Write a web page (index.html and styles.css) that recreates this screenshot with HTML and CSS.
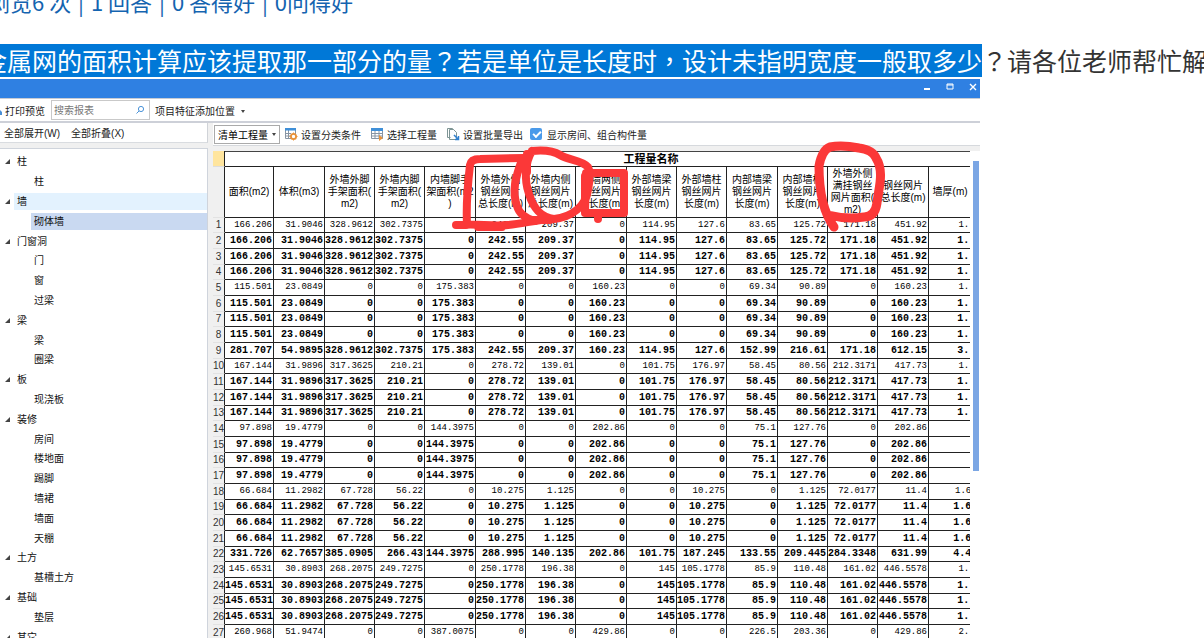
FILE: index.html
```html
<!DOCTYPE html>
<html lang="zh-CN">
<head>
<meta charset="utf-8">
<title>工程量报表</title>
<link rel="stylesheet" href="styles.css">
</head>
<body>
<p class="stats">浏览6 次 <i>|</i> 1 回答 <i>|</i> 0 答得好 <i>|</i> 0问得好</p>
<h1 class="question"><mark>金属网的面积计算应该提取那一部分的量<span class="punct" lang="zh-TW">？</span>若是单位是长度时<span class="punct" lang="zh-TW">，</span>设计未指明宽度一般取多少</mark><span class="punct" lang="zh-TW">？</span>请各位老师帮忙解</h1>

<main class="app">
  <header class="titlebar">
    <button aria-label="最小化"><svg viewBox="0 0 8 8"><path d="M1 6h6" stroke-width="2"/></svg></button>
    <button aria-label="最大化"><svg viewBox="0 0 8 8"><path d="M1 1h6v5H1zM1 2h6"/></svg></button>
    <button aria-label="关闭"><svg viewBox="0 0 8 8"><path d="M1 1l6 6M7 1l-6 6" stroke-width="1.4"/></svg></button>
  </header>
  <div class="toolbar">
    <svg class="printer" viewBox="0 0 3 10"><path d="M0 5l2 2v3H0z"/></svg>
    <button>打印预览</button>
    <div class="search">
      <input type="text" placeholder="搜索报表" aria-label="搜索报表">
      <svg viewBox="0 0 10 10"><circle cx="6" cy="4" r="2.6"/><path d="M4 6L1.5 8.5"/></svg>
    </div>
    <button>项目特征添加位置<i class="caret"></i></button>
  </div>
  <div class="body">
    <aside class="side">
      <div class="sidebar-tools"><button>全部展开(W)</button><button>全部折叠(X)</button></div>
      <ul class="tree">
        <li class="group"><span>柱</span></li><li><span>柱</span></li>
        <li class="group hover"><span>墙</span></li><li class="selected"><span>砌体墙</span></li>
        <li class="group"><span>门窗洞</span></li><li><span>门</span></li><li><span>窗</span></li><li><span>过梁</span></li>
        <li class="group"><span>梁</span></li><li><span>梁</span></li><li><span>圈梁</span></li>
        <li class="group"><span>板</span></li><li><span>现浇板</span></li>
        <li class="group"><span>装修</span></li><li><span>房间</span></li><li><span>楼地面</span></li><li><span>踢脚</span></li><li><span>墙裙</span></li><li><span>墙面</span></li><li><span>天棚</span></li>
        <li class="group"><span>土方</span></li><li><span>基槽土方</span></li>
        <li class="group"><span>基础</span></li><li><span>垫层</span></li>
        <li class="group"><span>其它</span></li>
      </ul>
    </aside>
    <section class="report">
      <div class="report-tools">
        <button class="picker">清单工程量<i class="caret"></i></button>
        <button><svg viewBox="0 0 14 14"><path fill="#fff" stroke="#8794a3" d="M1.5 1.5h10v10h-10zM4.5 3v9M1 6.5h6M1 9h6"/><path fill="#3f8fd8" d="M1 1h11v2.5H1z"/><circle cx="9.5" cy="9.5" r="2.6" fill="#fff" stroke="#e8923a" stroke-width="1.8"/><path stroke="#e8923a" d="M9.5 5.5v2M9.5 11.5v2M5.5 9.5h2M11.5 9.5h2"/></svg>设置分类条件</button>
        <button><svg viewBox="0 0 14 14"><path fill="#fff" stroke="#8794a3" d="M1.5 1.5h11v10h-11zM5 3v8M9 3v8M1 6.5h11M1 9h11"/><path fill="#3f8fd8" d="M1 1h12v3H1z"/><path fill="#e8923a" d="M9 8l4 3-4 3z"/></svg>选择工程量</button>
        <button><svg viewBox="0 0 14 14"><path fill="#fff" stroke="#7e9595" d="M4.5 10.5h-3v-9h5l1 1M3.5 2.5h4l3 3v7h-7z"/><path stroke="#2e7fd0" stroke-width="1.5" d="M8 8l4 4M12.5 9v3.5H9" fill="none"/></svg>设置批量导出</button>
        <label><input type="checkbox" checked>显示房间、组合构件量</label>
      </div>
      <div class="sheet">
        <table>
          <colgroup><col class="c-no"><col class="c-a"><col class="c-b"><col class="c-c"><col class="c-c"><col class="c-b"><col class="c-c"><col class="c-c"><col class="c-b"><col class="c-c"><col class="c-c"><col class="c-b"><col class="c-c"><col class="c-c"><col class="c-b"><col class="c-last"></colgroup>
          <thead>
            <tr class="caption"><th class="corner"></th><th colspan="15">工程量名称</th></tr>
            <tr class="fields"><th class="no"></th><th>面积(m2)</th><th>体积(m3)</th><th>外墙外脚<br>手架面积(<br>m2)</th><th>外墙内脚<br>手架面积(<br>m2)</th><th>内墙脚手<br>架面积(m2<br>)</th><th>外墙外侧<br>钢丝网片<br>总长度(m)</th><th>外墙内侧<br>钢丝网片<br>总长度(m)</th><th>外墙两侧<br>钢丝网片<br>总长度(m)</th><th>外部墙梁<br>钢丝网片<br>长度(m)</th><th>外部墙柱<br>钢丝网片<br>长度(m)</th><th>内部墙梁<br>钢丝网片<br>长度(m)</th><th>内部墙柱<br>钢丝网片<br>长度(m)</th><th>外墙外侧<br>满挂钢丝<br>网片面积(<br>m2)</th><th>钢丝网片<br>总长度(m)</th><th>墙厚(m)</th></tr>
          </thead>
          <tbody id="rows"></tbody>
        </table>
      </div>
      <div class="scroll"></div>
    </section>
  </div>
  <svg class="marks" viewBox="0 79 980 559">
    <path d="M456 225H467C466 205 468 182 470 165Q471 159 480 159L524 158M460 225C478 223 490 227 508 225S535 220 552 219M478 227H502"/>
    <path d="M522 160C515 178 512 192 517 206Q520 217 535 221M532 151C525 162 524 180 529 194C533 207 541 218 554 219C572 217 586 206 588 190C590 180 591 172 588 167C582 160 568 160 560 155C552 150 542 150 532 151M527 154V172M532 220H550"/>
    <path d="M586 173H624V213H585zM585 176V212M598 213V219"/>
    <path d="M834 227C823 212 819 190 819 166Q822 150 830 147C840 145 849 146 859 148Q873 150 876 158C885 172 878 190 877 203Q875 217 864 217C850 219 840 218 828 215" stroke-width="9"/>
  </svg>
</main>
<script src="rows.js"></script>
</body>
</html>
```
FILE: styles.css
```css
* { box-sizing: border-box; }
body {
  margin: 0;
  height: 100vh;
  overflow: hidden;
  display: flex;
  flex-direction: column;
  background: #fff;
  color: #222;
  font-family: "Liberation Sans", "Noto Sans CJK SC", sans-serif;
  font-size: 10px;
}
button {
  border: 0;
  padding: 0;
  background: none;
  color: inherit;
  font: inherit;
  white-space: nowrap;
}
.stats {
  margin: -15px 0 0 -12px;
  height: 59px;
  line-height: 32px;
  font-family: "Noto Sans CJK SC", sans-serif;
  font-size: 22px;
  color: #1464b0;
}
.stats i { margin: 0 2px; font-style: normal; }
.question {
  margin: 0 0 2px;
  height: 33px;
  line-height: 33px;
  text-indent: -18px;
  white-space: nowrap;
  font-family: "Noto Sans CJK SC", sans-serif;
  font-size: 25px;
  font-weight: 400;
  color: #333;
}
.question mark {
  display: inline-block;
  height: 33px;
  text-indent: 0;
  background: #0078d7;
  color: #fff;
}
.punct { font-family: "Noto Sans CJK TC", sans-serif; }
.app {
  position: relative;
  flex: 1;
  min-height: 0;
  width: 81.4%;
  display: flex;
  flex-direction: column;
  background: #f0f0f0;
}
.titlebar {
  flex: none;
  height: 19px;
  padding: 0 3px 4px;
  display: flex;
  justify-content: flex-end;
  align-items: center;
  gap: 15px;
  background: #2f80e2;
}
.titlebar button { width: 8px; height: 8px; }
.titlebar svg { display: block; width: 8px; height: 8px; fill: none; stroke: #fff; }
.toolbar {
  flex: none;
  height: 25px;
  display: flex;
  align-items: center;
  background: #fff;
  border-top: 1px solid #c6cbd4;
  border-bottom: 2px solid #cdd0d8;
}
.printer { width: 3px; height: 10px; margin-right: 2px; fill: #4a8fd6; }
.search {
  width: 99px;
  height: 20px;
  margin: 0 5px 0 6px;
  display: flex;
  align-items: center;
  border: 1px solid #c9c9c9;
}
.search input {
  flex: 1;
  min-width: 0;
  border: 0;
  padding: 0 2px;
  font: inherit;
  outline: 0;
}
.search input::placeholder { color: #777; }
.search svg { width: 10px; height: 10px; margin-right: 4px; fill: none; stroke: #4a93d8; }
.caret {
  display: inline-block;
  margin-left: 6px;
  vertical-align: 2px;
  border: 2px solid transparent;
  border-top: 3px solid #444;
  border-bottom: 0;
}
.body { flex: 1; min-height: 0; display: flex; gap: 5px; }
.side { flex: none; width: 208px; display: flex; flex-direction: column; }
.sidebar-tools {
  flex: none;
  height: 20px;
  margin-bottom: 5px;
  padding-left: 4px;
  display: flex;
  align-items: center;
  gap: 11px;
  background: #fff;
  border-right: 1px solid #d0d3d8;
  border-bottom: 1px solid #d9dce0;
}
.tree {
  flex: 1;
  min-height: 0;
  overflow: hidden;
  margin: 0;
  padding: 4px 0 0;
  list-style: none;
  background: #fff;
  border-top: 1px solid #cfd4dc;
  border-right: 1px solid #cfd4dc;
  color: #111;
}
.tree li { height: 20px; padding-left: 31px; }
.tree li:nth-child(5n) { height: 19px; }
.tree span { display: block; height: 17px; padding-left: 3px; line-height: 17px; }
.tree .group { display: flex; padding-left: 5px; gap: 4px; }
.tree .group::before {
  content: "";
  width: 5px;
  height: 5px;
  margin-top: 6px;
  background: #444;
  clip-path: polygon(100% 0, 100% 100%, 0 100%);
}
.tree .group span { flex: 1; }
.tree .hover span { background: #e3f2fe; }
.tree .selected span { background: #c9d9f1; }
.report {
  flex: 1;
  min-width: 0;
  display: grid;
  grid-template-columns: 1fr 10px;
  grid-template-rows: 23px 1fr;
  row-gap: 5px;
}
.report-tools {
  grid-column: 1 / -1;
  padding-left: 1px;
  display: flex;
  align-items: center;
  gap: 9px;
  background: #fff;
  border-bottom: 1px solid #d6d9dd;
}
.report-tools button, .report-tools label { display: flex; align-items: center; }
.report-tools svg { width: 14px; height: 14px; margin-right: 3px; fill: none; }
.report-tools .picker {
  width: 66px;
  height: 19px;
  margin-right: -5px;
  padding-left: 3px;
  border: 1px solid #aaa;
  color: #000;
}
.picker .caret { margin-left: 4px; }
.report-tools input {
  appearance: none;
  width: 12px;
  height: 12px;
  margin: 0 5px 0 -2px;
  border-radius: 2px;
  background: #4a9aea;
}
.report-tools input:checked::after {
  content: "";
  display: block;
  width: 6px;
  height: 3px;
  margin: 3px;
  border: solid #fff;
  border-width: 0 0 2px 2px;
  transform: rotate(-45deg);
}
.sheet { min-width: 0; overflow: hidden; background: #fff; }
.scroll { background: #fff; padding: 10px 1px 0 3px; }
.scroll::before { content: ""; display: block; height: 310px; background: #7ba6e4; }
table {
  width: 757px;
  table-layout: fixed;
  border-collapse: separate;
  border-spacing: 0;
  color: #000;
}
.c-no { width: 12px; }
.c-a { width: 49px; }
.c-b { width: 51px; }
.c-c { width: 50px; }
.c-last { width: 42px; }
th, td {
  padding: 0;
  border-right: 1px solid #222;
  border-bottom: 1px solid #222;
  white-space: nowrap;
}
th:last-child, td:last-child { border-right: 0; }
.caption { height: 16px; line-height: 14px; }
.caption th { padding-left: 106px; border-top: 1px solid #444; font-size: 11px; }
.caption .corner { padding: 0; border-top: 0; border-bottom-color: #ddd; background: #ffe59e; }
.fields { height: 51px; line-height: 12px; }
.fields th { font-size: 10px; font-weight: 400; }
tbody tr { height: 16px; line-height: 15px; }
tbody tr:nth-child(3n + 1) { height: 15px; line-height: 14px; }
td {
  padding-right: 1px;
  text-align: right;
  font-family: "Liberation Mono", monospace;
  font-size: 9px;
}
td:last-child { padding-right: 0; }
td.cut { padding-right: 2px; }
.total td { font-size: 10px; font-weight: 700; }
.fields .no, tbody th {
  background: #f0f0f0;
  border-bottom-color: #e2e2e2;
  font-size: 10px;
  font-weight: 400;
  color: #333;
}
.marks {
  position: absolute;
  top: 0;
  left: 0;
  width: 980px;
  height: 559px;
  pointer-events: none;
  fill: none;
  stroke: #fb3838;
  stroke-width: 8;
  stroke-linecap: round;
  stroke-linejoin: round;
}
```
FILE: rows.js
```js
// Each entry: how many sheet rows it fills, whether the first one is a detail row, and the values.
const groups = [
  [4, true, "166.206 31.9046 328.9612 302.7375 0 242.55 209.37 0 114.95 127.6 83.65 125.72 171.18 451.92 1."],
  [4, true, "115.501 23.0849 0 0 175.383 0 0 160.23 0 0 69.34 90.89 0 160.23 1."],
  [1, false, "281.707 54.9895 328.9612 302.7375 175.383 242.55 209.37 160.23 114.95 127.6 152.99 216.61 171.18 612.15 3."],
  [4, true, "167.144 31.9896 317.3625 210.21 0 278.72 139.01 0 101.75 176.97 58.45 80.56 212.3171 417.73 1."],
  [4, true, "97.898 19.4779 0 0 144.3975 0 0 202.86 0 0 75.1 127.76 0 202.86 "],
  [4, true, "66.684 11.2982 67.728 56.22 0 10.275 1.125 0 0 10.275 0 1.125 72.0177 11.4 1.6"],
  [1, false, "331.726 62.7657 385.0905 266.43 144.3975 288.995 140.135 202.86 101.75 187.245 133.55 209.445 284.3348 631.99 4.4"],
  [4, true, "145.6531 30.8903 268.2075 249.7275 0 250.1778 196.38 0 145 105.1778 85.9 110.48 161.02 446.5578 1."],
  [1, true, "260.968 51.9474 0 0 387.0075 0 0 429.86 0 0 226.5 203.36 0 429.86 2."]
];
const body = document.getElementById("rows");
let number = 0;
for (const [count, detail, values] of groups) {
  for (let i = 0; i < count; i++) {
    const row = body.insertRow();
    if (!(detail && i === 0)) row.className = "total";
    const head = document.createElement("th");
    head.textContent = ++number;
    row.append(head);
    for (const value of values.split(" ")) {
      const cell = row.insertCell();
      cell.textContent = value;
      if (value.endsWith(".")) cell.className = "cut";
    }
  }
}
```
